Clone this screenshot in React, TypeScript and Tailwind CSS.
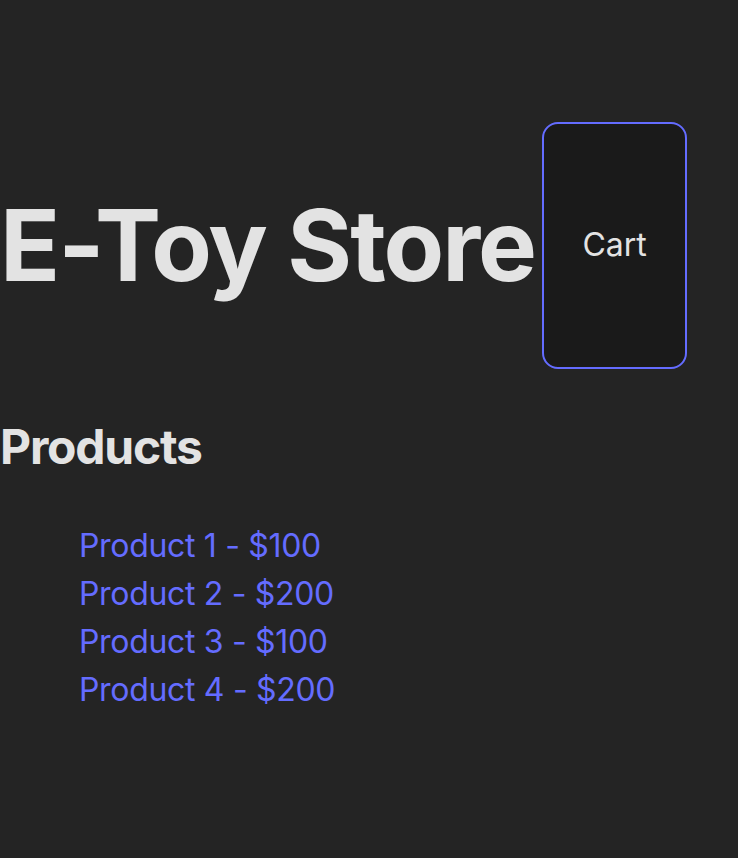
import React from 'react';

const products = [
  { name: 'Product 1', price: 100 },
  { name: 'Product 2', price: 200 },
  { name: 'Product 3', price: 100 },
  { name: 'Product 4', price: 200 },
];

const App = () => {
  return (
    <div className="min-h-screen bg-[#242424] text-[#e3e3e3] font-['Inter',sans-serif] leading-[1.5] pt-[122px]">
      {/* Header */}
      <div className="flex items-stretch">
        <h1 className="my-[69px] text-[99px] leading-[1.1] font-bold tracking-[-0.02em]">E-Toy Store</h1>
        <button className="ml-[7px] w-[145px] rounded-[16px] border-2 border-[#646cff] bg-[#1a1a1a] px-[38px] text-[32px] font-normal text-[#e3e3e3]">
          Cart
        </button>
      </div>

      {/* Product list */}
      <h2 className="mt-[42px] text-[48px] font-bold leading-[1.5] tracking-[-0.025em]">Products</h2>
      <ul className="mt-[39px] pl-[79px] list-none">
        {products.map((p) => (
          <li key={p.name} className="text-[32px] leading-[48px] tracking-[-0.01em]">
            <a href="#" className="font-normal text-[#646cff]">
              {p.name} - ${p.price}
            </a>
          </li>
        ))}
      </ul>
    </div>
  );
};

export default App;
